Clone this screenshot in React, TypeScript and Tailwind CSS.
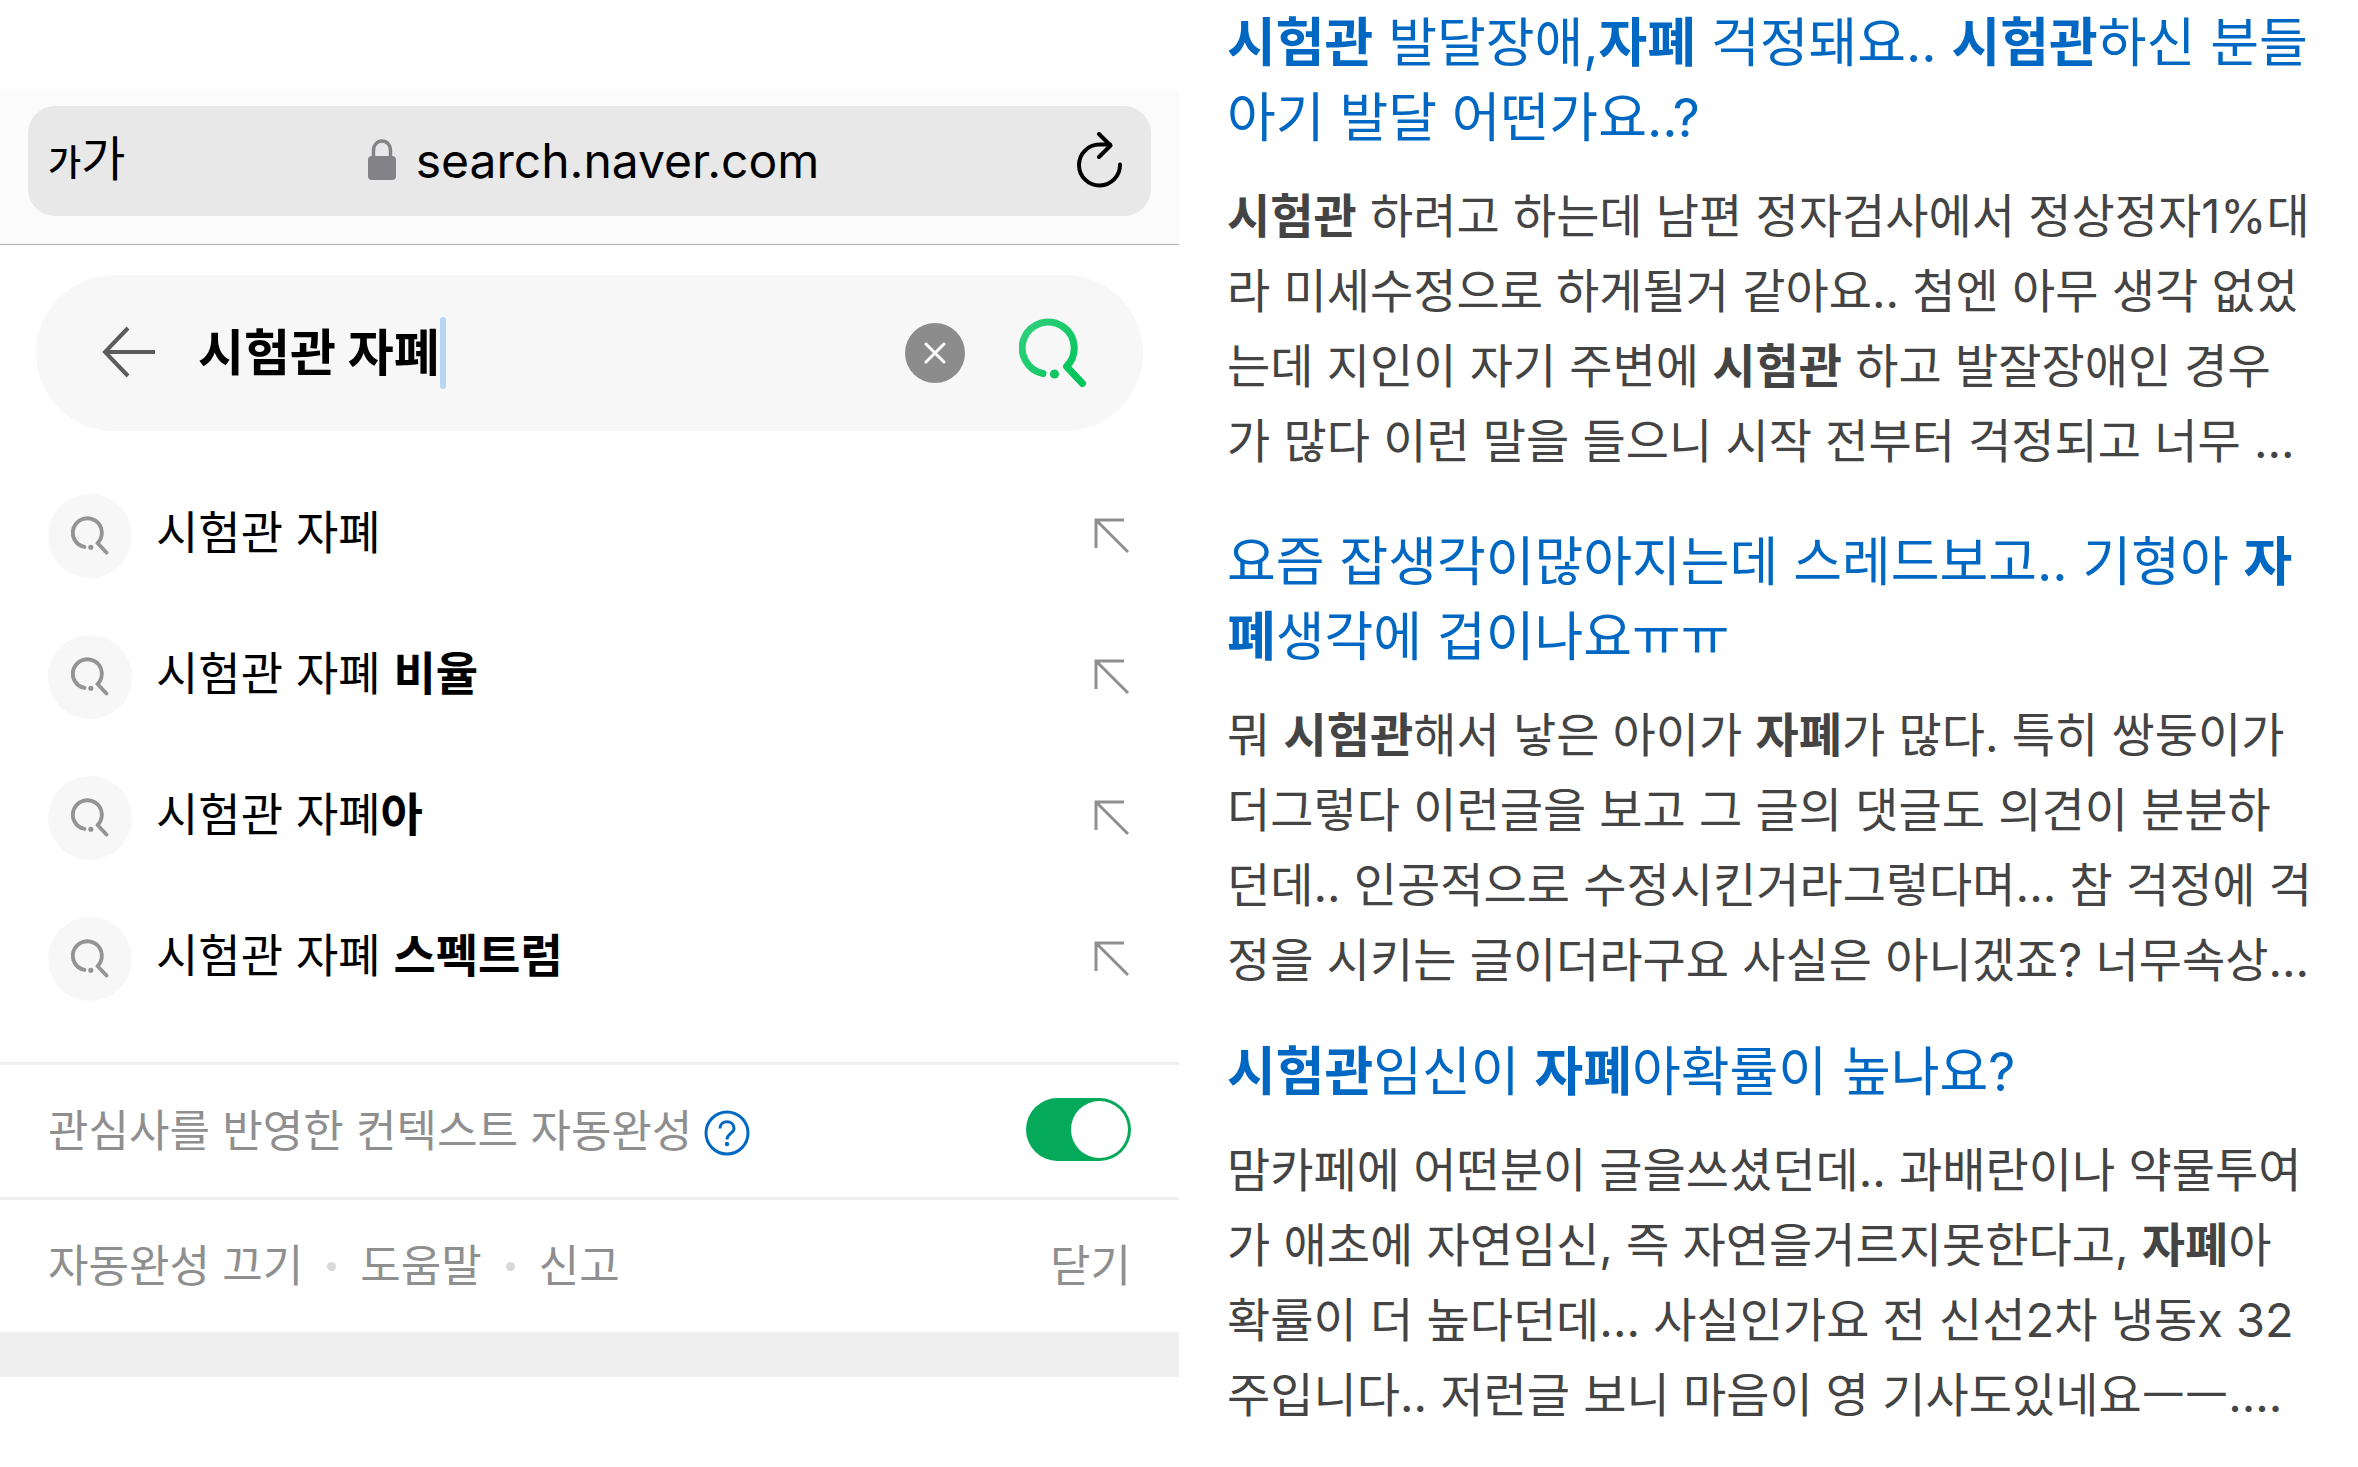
import { useState } from 'react';

interface Chunk {
  text: string;
  bold?: boolean;
}

interface Post {
  title: Chunk[][];
  body: Chunk[][];
}

// **word** marks a matched keyword
const parse = (line: string): Chunk[] =>
  line
    .split('**')
    .map((text, i) => ({ text, bold: i % 2 === 1 }))
    .filter((chunk) => chunk.text !== '');

const suggestions = [
  '시험관 자폐',
  '시험관 자폐 **비율**',
  '시험관 자폐**아**',
  '시험관 자폐 **스펙트럼**',
];

const posts: Post[] = [
  {
    title: [
      '**시험관** 발달장애,**자폐** 걱정돼요.. **시험관**하신 분들',
      '아기 발달 어떤가요..?',
    ].map(parse),
    body: [
      '**시험관** 하려고 하는데 남편 정자검사에서 정상정자1%대',
      '라 미세수정으로 하게될거 같아요.. 첨엔 아무 생각 없었',
      '는데 지인이 자기 주변에 **시험관** 하고 발잘장애인 경우',
      '가 많다 이런 말을 들으니 시작 전부터 걱정되고 너무 ...',
    ].map(parse),
  },
  {
    title: [
      '요즘 잡생각이많아지는데 스레드보고.. 기형아 **자**',
      '**폐**생각에 겁이나요ㅠㅠ',
    ].map(parse),
    body: [
      '뭐 **시험관**해서 낳은 아이가 **자폐**가 많다. 특히 쌍둥이가',
      '더그렇다 이런글을 보고 그 글의 댓글도 의견이 분분하',
      '던데.. 인공적으로 수정시킨거라그렇다며... 참 걱정에 걱',
      '정을 시키는 글이더라구요 사실은 아니겠죠? 너무속상...',
    ].map(parse),
  },
  {
    title: ['**시험관**임신이 **자폐**아확률이 높나요?'].map(parse),
    body: [
      '맘카페에 어떤분이 글을쓰셨던데.. 과배란이나 약물투여',
      '가 애초에 자연임신, 즉 자연을거르지못한다고, **자폐**아',
      '확률이 더 높다던데... 사실인가요 전 신선2차 냉동x 32',
      '주입니다.. 저런글 보니 마음이 영 기사도있네요ㅡㅡ....',
    ].map(parse),
  },
];

function Chunks({ chunks }: { chunks: Chunk[] }) {
  return (
    <>
      {chunks.map((chunk, i) =>
        chunk.bold ? (
          <b key={i} className="font-bold">
            {chunk.text}
          </b>
        ) : (
          <span key={i}>{chunk.text}</span>
        ),
      )}
    </>
  );
}

function Lines({ lines }: { lines: Chunk[][] }) {
  return (
    <>
      {lines.map((line, i) => (
        <span key={i} className="block whitespace-nowrap">
          <Chunks chunks={line} />
        </span>
      ))}
    </>
  );
}

function SearchMark({ className, color }: { className: string; color: string }) {
  return (
    <svg viewBox="0 0 68 70" fill="none" className={className}>
      <defs>
        <linearGradient id="green" gradientUnits="userSpaceOnUse" x1="4" y1="10" x2="60" y2="50">
          <stop offset="0" stopColor="#2fd07c" />
          <stop offset="1" stopColor="#06c55b" />
        </linearGradient>
      </defs>
      <path
        d="M24 55.500A26 26 0 1 1 47.500 48.500L63.500 65.500"
        stroke={color}
        strokeWidth="7"
        strokeLinecap="round"
        strokeLinejoin="round"
      />
      <circle cx="35.500" cy="56" r="4.600" fill={color} />
    </svg>
  );
}

function AddressBar() {
  return (
    <header className="border-b border-[#adadad] bg-[#fbfbfb] px-7 pt-4 pb-7">
      <div className="flex h-[110px] items-center justify-between rounded-[27px] bg-[#e8e8e8] pr-7 pl-5">
        <button className="flex w-28 items-baseline" aria-label="글자 크기">
          <span className="text-[36px] leading-[60px] font-medium">가</span>
          <span className="text-[48px] leading-[60px]">가</span>
        </button>
        <div className="flex items-center gap-5">
          <svg viewBox="0 0 28 44" className="h-11 w-7">
            <path
              d="M5.500 21V11a8.500 9 0 0 1 17 0v10"
              fill="none"
              stroke="#838287"
              strokeWidth="3.500"
            />
            <rect y="17" width="28" height="24" rx="4" fill="#838287" />
          </svg>
          <span className="text-[48px] leading-[60px]">search.naver.com</span>
        </div>
        <button className="flex w-24 justify-end" aria-label="새로고침">
          <svg
            viewBox="0 0 46 58"
            fill="none"
            stroke="#000"
            strokeWidth="4"
            strokeLinecap="round"
            strokeLinejoin="round"
            className="h-[58px] w-[46px]"
          >
            <path d="M43 32.500a20.500 20.500 0 1 1-20.500-20H33" />
            <path d="M22 2l11.500 11.500L22 25" />
          </svg>
        </button>
      </div>
    </header>
  );
}

function SearchBox() {
  const [query, setQuery] = useState('시험관 자폐');

  return (
    <form
      className="mx-9 mt-[30px] flex h-[156px] items-center rounded-full bg-[#f7f7f7] pr-14 pl-16"
      onSubmit={(e) => e.preventDefault()}
    >
      <button type="button" aria-label="뒤로">
        <svg
          viewBox="0 0 56 54"
          fill="none"
          stroke="#5c5c5c"
          strokeWidth="4"
          className="h-[54px] w-14"
        >
          <path d="M28 2L5 26l23 24M5 26h50" />
        </svg>
      </button>
      <div className="ml-[42px] flex min-w-0 flex-1 items-center">
        <input
          aria-label="검색어"
          value={query}
          onChange={(e) => setQuery(e.target.value)}
          className="field-sizing-content bg-transparent text-[50px] leading-[72px] font-bold outline-none"
        />
        <span className="h-[72px] w-[6px] rounded-full bg-[#b9d6f5]" />
      </div>
      <button
        type="button"
        aria-label="지우기"
        onClick={() => setQuery('')}
        className="flex size-15 items-center justify-center rounded-full bg-[#8c8c8c]"
      >
        <svg
          viewBox="0 0 22 22"
          stroke="#fff"
          strokeWidth="3"
          strokeLinecap="round"
          className="size-[22px]"
        >
          <path d="M2 2l18 18M20 2L2 20" />
        </svg>
      </button>
      <button type="submit" aria-label="검색" className="ml-[54px]">
        <SearchMark className="h-[70px] w-[68px]" color="url(#green)" />
      </button>
    </form>
  );
}

function SuggestionList() {
  return (
    <ul className="mt-[34px] pb-[33px]">
      {suggestions.map((suggestion) => (
        <li key={suggestion} className="flex h-[141px] items-center px-12">
          <span className="flex size-21 items-center justify-center rounded-full bg-[#f7f7f7]">
            <SearchMark className="h-[39px] w-[38px]" color="#949494" />
          </span>
          <a href="#" className="ml-6 flex-1 pb-2 text-[46px] leading-[68px]">
            <Chunks chunks={parse(suggestion)} />
          </a>
          <button aria-label="검색어 입력">
            <svg
              viewBox="0 0 37 36"
              fill="none"
              stroke="#8f8f8f"
              strokeWidth="3"
              className="h-9 w-[37px]"
            >
              <path d="M30 2H2v28M2 2l32 32" />
            </svg>
          </button>
        </li>
      ))}
    </ul>
  );
}

function ContextToggle() {
  const [enabled, setEnabled] = useState(true);

  return (
    <div className="flex h-[135px] items-center border-t-3 border-[#efefef] px-12">
      <label htmlFor="context" className="text-[44px] leading-[64px]">
        관심사를 반영한 컨텍스트 자동완성
      </label>
      <button aria-label="도움말" className="ml-3 pt-1">
        <svg
          viewBox="0 0 46 46"
          fill="none"
          stroke="#0068c3"
          strokeWidth="3"
          className="size-[46px]"
        >
          <circle cx="23" cy="23" r="21" />
          <path d="M16 18.500c0-9 14-9 14 0 0 5-7 5-7 11" />
          <circle cx="23" cy="34" r="2.200" fill="#0068c3" stroke="none" />
        </svg>
      </button>
      <span className="relative mb-1 ml-auto h-[63px] w-[105px]">
        <input
          id="context"
          type="checkbox"
          role="switch"
          checked={enabled}
          onChange={(e) => setEnabled(e.target.checked)}
          className="peer block h-full w-full appearance-none rounded-full bg-gray-300 checked:bg-[#04a959]"
        />
        <span className="pointer-events-none absolute top-[3px] left-[3px] size-[57px] rounded-full bg-white peer-checked:left-[45px]" />
      </span>
    </div>
  );
}

function Dot() {
  return <span className="size-[9px] rounded-full bg-[#d8d8d8]" />;
}

function SearchPanel() {
  return (
    <section className="pt-[90px] text-black">
      <AddressBar />
      <SearchBox />
      <SuggestionList />
      <div className="text-[#8f8f8f]">
        <ContextToggle />
        <div className="flex h-[135px] items-center gap-6 border-t-3 border-[#efefef] px-12 text-[44px] leading-[64px]">
          <a href="#">자동완성 끄기</a>
          <Dot />
          <a href="#">도움말</a>
          <Dot />
          <a href="#">신고</a>
          <button className="ml-auto">닫기</button>
        </div>
        <div className="h-[45px] bg-[#efefef]" />
      </div>
    </section>
  );
}

export default function App() {
  return (
    <main className="grid grid-cols-2 overflow-hidden bg-white font-[Inter,'Noto_Sans_CJK_KR',sans-serif]">
      <SearchPanel />
      <section className="pt-[6px] pl-12">
        {posts.map((post, i) => (
          <article key={i} className="mb-[47px] nth-2:mb-[38px] last:mb-0">
            <h2 className="text-[53px] leading-[75px] text-[#0068c3]">
              <a href="#">
                <Lines lines={post.title} />
              </a>
            </h2>
            <p className="mt-[22px] text-[47px] leading-[75px] text-[#444]">
              <Lines lines={post.body} />
            </p>
          </article>
        ))}
      </section>
    </main>
  );
}
